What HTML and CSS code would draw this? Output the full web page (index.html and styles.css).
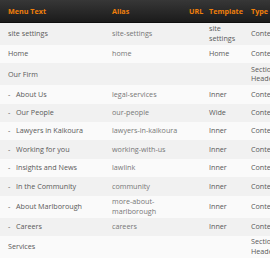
FILE: index.html
```html
<!DOCTYPE html>
<html>
<head>
<meta charset="utf-8">
<link rel="stylesheet" href="styles.css">
</head>
<body>
<table class="menu-table">
  <colgroup>
    <col class="c-text"><col class="c-alias"><col class="c-url"><col class="c-tpl"><col class="c-type">
  </colgroup>
  <thead>
    <tr><th>Menu Text</th><th>Alias</th><th>URL</th><th>Template</th><th>Type</th></tr>
  </thead>
  <tbody>
    <tr class="dbl"><td>site settings</td><td class="alias">site-settings</td><td></td><td>site settings</td><td>Content</td></tr>
    <tr><td>Home</td><td class="alias">home</td><td></td><td>Home</td><td>Content</td></tr>
    <tr class="dbl"><td>Our Firm</td><td class="alias"></td><td></td><td></td><td>Section Header</td></tr>
    <tr><td><span class="dash">-</span>About Us</td><td class="alias">legal-services</td><td></td><td>Inner</td><td>Content</td></tr>
    <tr><td><span class="dash">-</span>Our People</td><td class="alias">our-people</td><td></td><td>Wide</td><td>Content</td></tr>
    <tr><td><span class="dash">-</span>Lawyers in Kaikoura</td><td class="alias">lawyers-in-kaikoura</td><td></td><td>Inner</td><td>Content</td></tr>
    <tr><td><span class="dash">-</span>Working for you</td><td class="alias">working-with-us</td><td></td><td>Inner</td><td>Content</td></tr>
    <tr><td><span class="dash">-</span>Insights and News</td><td class="alias">lawlink</td><td></td><td>Inner</td><td>Content</td></tr>
    <tr><td><span class="dash">-</span>In the Community</td><td class="alias">community</td><td></td><td>Inner</td><td>Content</td></tr>
    <tr class="dbl"><td><span class="dash">-</span>About Marlborough</td><td class="alias">more-about-marlborough</td><td></td><td>Inner</td><td>Content</td></tr>
    <tr><td><span class="dash">-</span>Careers</td><td class="alias">careers</td><td></td><td>Inner</td><td>Content</td></tr>
    <tr class="dbl"><td>Services</td><td class="alias"></td><td></td><td></td><td>Section Header</td></tr>
  </tbody>
</table>
</body>
</html>
```

FILE: styles.css
```css
html, body {
  margin: 0;
  padding: 0;
  overflow: hidden;
  background: #fafafa;
}
body {
  font-family: "Open Sans", "DejaVu Sans", sans-serif;
  font-size: 7.2px;
  color: #555;
}
.menu-table {
  border-collapse: collapse;
  table-layout: fixed;
  width: 290px;
}
.c-text { width: 108px; }
.c-alias { width: 77px; }
.c-url { width: 20px; }
.c-tpl { width: 42px; }
.c-type { width: 43px; }
.menu-table th {
  height: 22px;
  padding: 0 4px;
  text-align: left;
  font-weight: 700;
  color: #f07f0a;
  background: linear-gradient(#373737, #1b1b1b);
  border-bottom: 1px solid #0e0e0e;
  white-space: nowrap;
}
.menu-table th:first-child,
.menu-table td:first-child {
  padding-left: 8px;
}
.menu-table td {
  padding: 1.4px 4px;
  line-height: 9.6px;
  height: 15.6px;
  vertical-align: middle;
  color: #595959;
}
.menu-table tbody tr:nth-child(odd) {
  background: #f1f1f1;
}
.menu-table tbody tr:nth-child(even) {
  background: #fafafa;
}
.menu-table td.alias {
  color: #777;
}
.dash {
  display: inline-block;
  width: 8px;
}
```
